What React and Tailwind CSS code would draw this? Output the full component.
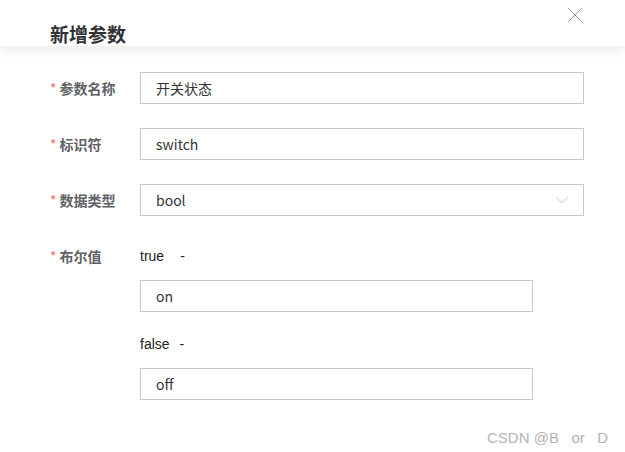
import { X, ChevronDown } from 'lucide-react';

const font = { fontFamily: '"Microsoft YaHei", "Noto Sans CJK SC", "Liberation Sans", sans-serif' };
const latin = { fontFamily: '"Liberation Sans", Arial, sans-serif' };

function Label({ children }) {
  return (
    <div className="w-[140px] pl-[50px] shrink-0 flex items-center h-8 text-[14px] font-bold text-[#606266] whitespace-nowrap">
      <span className="text-[#f56c6c] mr-[3px] font-normal">*</span>
      {children}
    </div>
  );
}

function Field({ value, width = 'w-[444px]', select }) {
  return (
    <div className={`${width} h-8 border border-[#c9c9c9] bg-white flex items-center pl-[15px] pr-[10px] text-[14px] text-[#333]`}>
      <span className="flex-1">{value}</span>
      {select && <ChevronDown className="w-[22px] h-[22px] text-[#c0c4cc]" strokeWidth={1} />}
    </div>
  );
}

export default function App() {
  return (
    <div className="w-[625px] h-[452px] bg-white relative overflow-hidden" style={font}>
      <div className="relative z-10 h-[46px] bg-white overflow-hidden shadow-[0_4px_10px_rgba(0,0,0,0.08)]">
        <div className="pl-[50px] pt-[20px] text-[19px] font-bold text-[#303133] leading-[28px]">新增参数</div>
        <X className="absolute right-[37px] top-[2px] w-[26px] h-[26px] text-[#909399]" strokeWidth={0.9} />
      </div>

      <div className="pt-[26px] flex flex-col">
        <div className="flex items-center">
          <Label>参数名称</Label>
          <Field value="开关状态" />
        </div>
        <div className="flex items-center mt-[24px]">
          <Label>标识符</Label>
          <Field value="switch" />
        </div>
        <div className="flex items-center mt-[24px]">
          <Label>数据类型</Label>
          <Field value="bool" select />
        </div>
        <div className="flex mt-[24px]">
          <Label>布尔值</Label>
          <div className="flex flex-col">
            <div className="h-8 flex items-center text-[14px] text-[#222]" style={latin}>
              <span>true</span>
              <span className="ml-[16px]">-</span>
            </div>
            <div className="mt-[8px]">
              <Field value="on" width="w-[393px]" />
            </div>
            <div className="h-8 mt-[16px] flex items-center text-[14px] text-[#222]" style={latin}>
              <span>false</span>
              <span className="ml-[10px]">-</span>
            </div>
            <div className="mt-[8px]">
              <Field value="off" width="w-[393px]" />
            </div>
          </div>
        </div>
      </div>

      <div className="absolute left-[487px] top-[427px] text-[15px] text-[#b4b4b4] whitespace-pre" style={latin}>
        CSDN @B   or   D
      </div>
    </div>
  );
}
